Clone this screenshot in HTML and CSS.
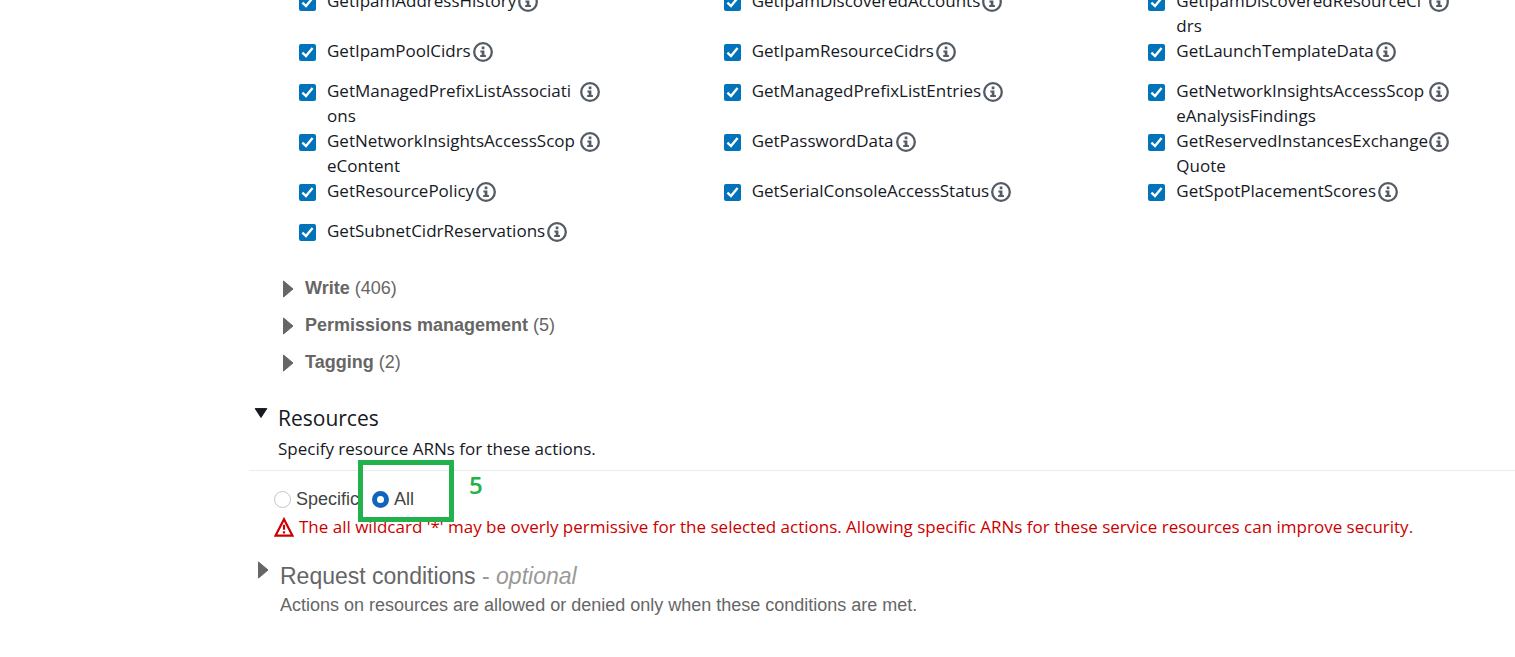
FILE: index.html
```html
<!DOCTYPE html>
<html lang="en">
<head>
<meta charset="utf-8">
<title>Policy editor</title>
<link rel="stylesheet" href="styles.css">
</head>
<body>
<svg class="sprite" aria-hidden="true">
  <symbol id="info" viewBox="0 0 20 20">
    <circle cx="10" cy="10" r="8.8" fill="none" stroke="#545b64" stroke-width="2.3"/>
    <path fill="#545b64" d="M8.7 4.6h2.7v2.6H8.7zM7.4 8.6h4v4.4h1.5v1.9H7.2V13h1.5v-2.5H7.4z"/>
  </symbol>
  <symbol id="right" viewBox="0 0 12 18"><path fill="#666" d="M1.5 1 11 9 1.5 17z" stroke="#666" stroke-linejoin="round"/></symbol>
  <symbol id="down" viewBox="0 0 14 10"><path fill="#16191f" d="M1.2.6h11.6L7 9.5z" stroke="#16191f" stroke-linejoin="round"/></symbol>
</svg>
<main class="editor">
  <div class="actions">
    <div class="action"><input class="check" type="checkbox" id="a1" checked><label class="name" for="a1">GetIpamAddressHistory</label><svg class="info"><use href="#info"/></svg></div>
    <div class="action"><input class="check" type="checkbox" id="a2" checked><label class="name" for="a2">GetIpamDiscoveredAccounts</label><svg class="info"><use href="#info"/></svg></div>
    <div class="action"><input class="check" type="checkbox" id="a3" checked><label class="name" for="a3">GetIpamDiscoveredResourceCi<wbr>drs</label><svg class="info"><use href="#info"/></svg></div>
    <div class="action"><input class="check" type="checkbox" id="a4" checked><label class="name" for="a4">GetIpamPoolCidrs</label><svg class="info"><use href="#info"/></svg></div>
    <div class="action"><input class="check" type="checkbox" id="a5" checked><label class="name" for="a5">GetIpamResourceCidrs</label><svg class="info"><use href="#info"/></svg></div>
    <div class="action"><input class="check" type="checkbox" id="a6" checked><label class="name" for="a6">GetLaunchTemplateData</label><svg class="info"><use href="#info"/></svg></div>
    <div class="action"><input class="check" type="checkbox" id="a7" checked><label class="name" for="a7">GetManagedPrefixListAssociati<wbr>ons</label><svg class="info"><use href="#info"/></svg></div>
    <div class="action"><input class="check" type="checkbox" id="a8" checked><label class="name" for="a8">GetManagedPrefixListEntries</label><svg class="info"><use href="#info"/></svg></div>
    <div class="action"><input class="check" type="checkbox" id="a9" checked><label class="name" for="a9">GetNetworkInsightsAccessScop<wbr>eAnalysisFindings</label><svg class="info"><use href="#info"/></svg></div>
    <div class="action"><input class="check" type="checkbox" id="a10" checked><label class="name" for="a10">GetNetworkInsightsAccessScop<wbr>eContent</label><svg class="info"><use href="#info"/></svg></div>
    <div class="action"><input class="check" type="checkbox" id="a11" checked><label class="name" for="a11">GetPasswordData</label><svg class="info"><use href="#info"/></svg></div>
    <div class="action"><input class="check" type="checkbox" id="a12" checked><label class="name" for="a12">GetReservedInstancesExchange<wbr>Quote</label><svg class="info"><use href="#info"/></svg></div>
    <div class="action"><input class="check" type="checkbox" id="a13" checked><label class="name" for="a13">GetResourcePolicy</label><svg class="info"><use href="#info"/></svg></div>
    <div class="action"><input class="check" type="checkbox" id="a14" checked><label class="name" for="a14">GetSerialConsoleAccessStatus</label><svg class="info"><use href="#info"/></svg></div>
    <div class="action"><input class="check" type="checkbox" id="a15" checked><label class="name" for="a15">GetSpotPlacementScores</label><svg class="info"><use href="#info"/></svg></div>
    <div class="action"><input class="check" type="checkbox" id="a16" checked><label class="name" for="a16">GetSubnetCidrReservations</label><svg class="info"><use href="#info"/></svg></div>
  </div>

  <div class="groups">
    <button class="group" type="button" aria-expanded="false"><svg class="caret"><use href="#right"/></svg><span><b>Write</b> (406)</span></button>
    <button class="group" type="button" aria-expanded="false"><svg class="caret"><use href="#right"/></svg><span><b>Permissions management</b> (5)</span></button>
    <button class="group" type="button" aria-expanded="false"><svg class="caret"><use href="#right"/></svg><span><b>Tagging</b> (2)</span></button>
  </div>

  <section class="resources">
    <button class="heading" type="button" aria-expanded="true">
      <svg class="caret-down"><use href="#down"/></svg>
      <span class="heading-text"><span class="title">Resources</span><span class="hint">Specify resource ARNs for these actions.</span></span>
    </button>
    <div class="choices">
      <input class="radio" type="radio" name="scope" id="specific"><label for="specific">Specific</label>
      <div class="choice-all">
        <input class="radio" type="radio" name="scope" id="all" checked><label for="all">All</label>
        <div class="mark"></div>
        <span class="mark-number">5</span>
      </div>
    </div>
    <p class="warning">
      <svg class="alert" viewBox="0 0 20 20"><path d="M10 2.2 18.4 18.6H1.6z" fill="none" stroke="#c00" stroke-width="2.2"/><path d="M10 7.8v5M10 14.2v2.2" stroke="#c00" stroke-width="2.2"/></svg>
      <span>The all wildcard '*' may be overly permissive for the selected actions. Allowing specific ARNs for these service resources can improve security.</span>
    </p>
  </section>

  <button class="conditions" type="button" aria-expanded="false">
    <svg class="caret"><use href="#right"/></svg>
    <span class="heading-text"><span class="conditions-title">Request conditions <span class="optional">- <i>optional</i></span></span><span class="conditions-hint">Actions on resources are allowed or denied only when these conditions are met.</span></span>
  </button>
</main>
</body>
</html>
```

FILE: styles.css
```css
* { box-sizing: border-box; }
body {
  margin: 0;
  background: #fff;
  color: #16191f;
  font: 17px/25px "Open Sans", "Noto Sans", sans-serif;
  overflow: hidden;
}
.sprite { display: none; }
svg { display: block; flex: none; }
button {
  border: 0;
  padding: 0;
  background: none;
  color: inherit;
  font: inherit;
  text-align: left;
}

/* the list is scrolled, so its first row starts above the window */
.editor { padding-left: 249px; margin-top: -12px; }

.actions {
  display: grid;
  grid-template-columns: repeat(3, 1fr);
  margin: 0 -58px 0 50px;
}
.action {
  display: flex;
  align-items: flex-start;
  min-height: 40px;
}
.check {
  appearance: none;
  flex: none;
  width: 17px;
  height: 17px;
  margin: 6px 11px 0 0;
  border-radius: 2px;
  background: #0073bb;
}
.check:checked {
  background-image: url("data:image/svg+xml,%3Csvg xmlns='http://www.w3.org/2000/svg' viewBox='0 0 17 17'%3E%3Cpath d='M3.4 8.6 7 12.1 13.6 4' fill='none' stroke='white' stroke-width='2.4'/%3E%3C/svg%3E");
}
.name { max-width: 253px; padding-right: 2px; }
.info { width: 20px; height: 20px; margin-top: 4px; }

.groups {
  display: flex;
  flex-direction: column;
  align-items: flex-start;
  margin: 12px 0 0 33px;
  color: #666;
  font: 18px/37px "Liberation Sans", Arial, sans-serif;
}
.group { display: flex; align-items: center; gap: 11px; }
.caret { width: 12px; height: 18px; }

.resources { margin-top: 22px; }
.heading {
  display: flex;
  width: 100%;
  gap: 10px;
  padding: 0 0 5px 5px;
  border-bottom: 1px solid #eaeded;
}
.caret-down { width: 14px; height: 10px; margin-top: 5px; }
.heading-text { display: flex; flex-direction: column; }
.title { font-size: 21px; line-height: 30px; }
.hint { line-height: 32px; }

.choices {
  display: flex;
  align-items: center;
  margin: 16px 0 0 25px;
  color: #444;
  font: 18px/25px "Liberation Sans", Arial, sans-serif;
}
.radio {
  appearance: none;
  flex: none;
  width: 17px;
  height: 17px;
  margin: 0 5px 0 0;
  border: 1px solid #c4c4c4;
  border-radius: 50%;
}
.radio:checked { border: 5px solid #1166bb; }
.choice-all {
  position: relative;
  display: flex;
  align-items: center;
  margin-left: 13px;
}
.mark {
  position: absolute;
  left: -14px;
  top: -27px;
  width: 96px;
  height: 62px;
  border: 5px solid #22b14c;
}
.mark-number {
  position: absolute;
  left: 97px;
  top: -15px;
  color: #22b14c;
  font: 600 24px/25px "Open Sans", sans-serif;
}
.warning {
  display: flex;
  align-items: center;
  gap: 5px;
  margin: 2px 0 0 25px;
  color: #c00;
  white-space: nowrap;
}
.alert { width: 20px; height: 20px; }

.conditions {
  display: flex;
  gap: 11px;
  margin: 22px 0 0 8px;
  color: #666;
  font: 18px/29px "Liberation Sans", Arial, sans-serif;
}
.conditions-title { font-size: 23px; line-height: 30px; }
.optional { color: #999; }
```
